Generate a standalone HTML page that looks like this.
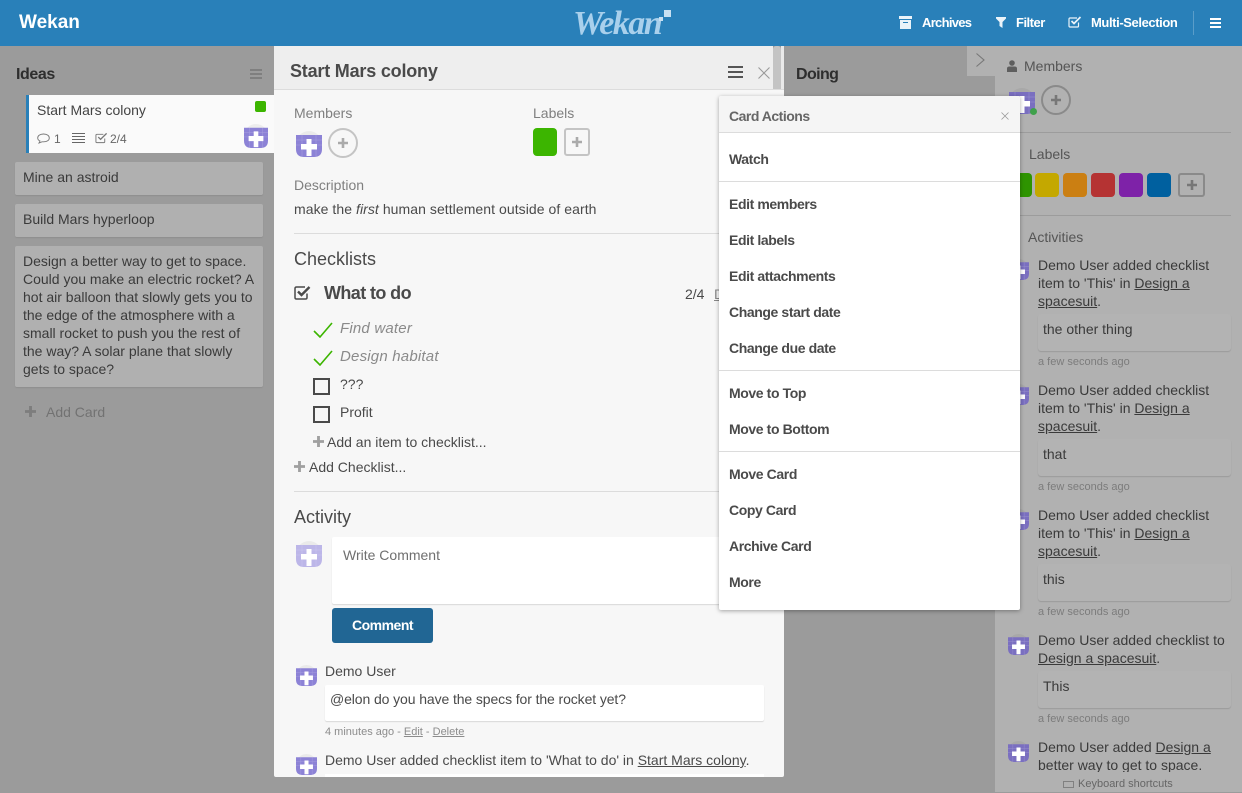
<!DOCTYPE html>
<html><head><meta charset="utf-8"><style>
html,body{margin:0;padding:0}
body{width:1242px;height:792px;overflow:hidden;position:relative;background:#9b9b9b;font-family:"Liberation Sans",sans-serif;color:#4a4a4a;font-size:14px}
.t{position:absolute;white-space:nowrap;line-height:18px}
.b{font-weight:bold}
.box{position:absolute}
u{text-underline-offset:1px}
svg{position:absolute;display:block}
.hd{color:#fff;font-weight:bold;font-size:13px;top:14px}
.m{left:729px;font-weight:bold;font-size:14px;color:#4a4a4a;letter-spacing:-.4px}
.sep{position:absolute;height:1px;background:#dcdcdc}
.card{position:absolute;left:15px;width:248px;background:#b0b0b0;border-radius:2px;box-shadow:0 1px 1px #8f8f8f}
.s{color:#3a3a3a}
.sc{position:absolute;left:1038px;width:193px;background:#b3b3b3;border-radius:3px;box-shadow:0 1px 1px #9a9a9a;height:37px}
.time{color:#7c7c7c;font-size:11px}
</style></head><body>

<svg width="0" height="0" style="position:absolute"><defs>
<symbol id="av" viewBox="0 0 26 26"><circle cx="13" cy="13" r="13" fill="#000" opacity=".05"/><path d="M0 4H26V18Q26 26 18 26H8Q0 26 0 18Z" fill="currentColor"/><path d="M0 9H26M0 14H26M6 4V26M20 4V26" stroke="#fff" stroke-width=".5" opacity=".25"/><path d="M10.500 8H15.500V13H21V18.500H15.500V25H10.500V18.500H5V13H10.500Z" fill="#fff"/></symbol>
<symbol id="pl" viewBox="0 0 10 10"><path d="M3.700 0H6.300V3.700H10V6.300H6.300V10H3.700V6.300H0V3.700H3.700Z" fill="currentColor"/></symbol>
<symbol id="ck" viewBox="0 0 20 16"><path d="M1 9L7 15L19 1" fill="none" stroke="#3cb500" stroke-width="1.600"/></symbol>
</defs></svg>

<!-- header -->
<div class="box" style="left:0;top:0;width:1242px;height:46px;background:#2980b9"></div>
<div class="t b" style="left:19px;top:11px;font-size:19px;line-height:24px;color:#fff">Wekan</div>
<div class="t" style="left:573px;top:5px;font:italic bold 34px/38px 'Liberation Serif',serif;color:#a9d0ec;letter-spacing:-1.500px">Wekan</div>
<div class="box" style="left:664px;top:10px;width:7px;height:7px;background:#c7e0f2"></div>
<div class="box" style="left:659px;top:17px;width:4px;height:4px;background:#c7e0f2"></div>
<svg style="left:899px;top:16px" width="13" height="13" viewBox="0 0 13 13"><path d="M0 0H13V3H0ZM1 4H12V13H1Z" fill="#eaf3f9"/><path d="M4 6H9V7H4Z" fill="#2980b9"/></svg>
<div class="t hd" style="left:922px;letter-spacing:-.7px">Archives</div>
<svg style="left:996px;top:17px" width="10" height="11" viewBox="0 0 10 11"><path d="M0 0H10V1.500L6.500 5V11L3.500 9V5L0 1.500Z" fill="#eaf3f9"/></svg>
<div class="t hd" style="left:1016px;letter-spacing:-.5px">Filter</div>
<svg style="left:1068px;top:16px" width="14" height="12" viewBox="0 0 14 12"><path d="M10.500 6.500V10Q10.500 11 9.500 11H2Q1 11 1 10V3Q1 2 2 2H9" fill="none" stroke="#eaf3f9" stroke-width="1.200"/><path d="M3.500 5L6 7.500L12.500 1" fill="none" stroke="#eaf3f9" stroke-width="1.700"/></svg>
<div class="t hd" style="left:1091px;letter-spacing:-.4px">Multi-Selection</div>
<div class="box" style="left:1193px;top:11px;width:1px;height:24px;background:#5a9dc9"></div>
<div class="box" style="left:1210px;top:18px;width:11px;height:2px;background:#fff;box-shadow:0 4px 0 #fff,0 8px 0 #fff"></div>

<!-- left list -->
<div class="t b" style="left:16px;top:66px;font-size:16px;color:#2e2e2e;letter-spacing:-.4px">Ideas</div>
<div class="box" style="left:250px;top:69px;width:12px;height:2px;background:#7f7f7f;box-shadow:0 4px 0 #7f7f7f,0 8px 0 #7f7f7f"></div>
<div class="box" style="left:26px;top:95px;width:248px;height:58px;background:#fafafa;box-sizing:border-box;border-left:3px solid #2980b9"></div>
<div class="t" style="left:37px;top:101px;color:#444">Start Mars colony</div>
<div class="box" style="left:255px;top:101px;width:11px;height:11px;background:#3cb500;border-radius:2px"></div>
<svg style="left:37px;top:133px" width="13" height="11" viewBox="0 0 13 11"><path d="M6.500 1C3 1 .7 2.800.7 5C.7 6.300 1.600 7.400 3 8L2 10L5 8.800H6.500C10 8.800 12.300 7.200 12.300 5C12.300 2.800 10 1 6.500 1Z" fill="none" stroke="#777" stroke-width=".9"/></svg>
<div class="t" style="left:54px;top:130px;font-size:12px;color:#666">1</div>
<div class="box" style="left:72px;top:133px;width:13px;height:1px;background:#666;box-shadow:0 3px 0 #666,0 6px 0 #666,0 9px 0 #666"></div>
<svg style="left:95px;top:132px" width="13" height="12" viewBox="0 0 14 12"><path d="M10.500 6.500V10Q10.500 11 9.500 11H2Q1 11 1 10V3Q1 2 2 2H9" fill="none" stroke="#777" stroke-width="1"/><path d="M3.500 5L6 7.500L12.500 1" fill="none" stroke="#777" stroke-width="1.400"/></svg>
<div class="t" style="left:110px;top:130px;font-size:12px;color:#666">2/4</div>
<svg style="left:244px;top:124px;color:#8c82d6" width="24" height="24"><use href="#av"/></svg>

<div class="card" style="top:162px;height:33px"></div>
<div class="t s" style="left:23px;top:168px">Mine an astroid</div>
<div class="card" style="top:204px;height:33px"></div>
<div class="t s" style="left:23px;top:210px">Build Mars hyperloop</div>
<div class="card" style="top:246px;height:141px"></div>
<div class="t s" style="left:23px;top:252px">Design a better way to get to space.</div>
<div class="t s" style="left:23px;top:270px">Could you make an electric rocket? A</div>
<div class="t s" style="left:23px;top:288px">hot air balloon that slowly gets you to</div>
<div class="t s" style="left:23px;top:306px">the edge of the atmosphere with a</div>
<div class="t s" style="left:23px;top:324px">small rocket to push you the rest of</div>
<div class="t s" style="left:23px;top:342px">the way? A solar plane that slowly</div>
<div class="t s" style="left:23px;top:360px">gets to space?</div>
<svg style="left:25px;top:406px;color:#7d7d7d" width="11" height="11"><use href="#pl"/></svg>
<div class="t" style="left:46px;top:403px;color:#727272">Add Card</div>

<!-- Doing column -->
<div class="t b" style="left:796px;top:66px;font-size:16px;color:#2e2e2e;letter-spacing:-.6px">Doing</div>
<div class="box" style="left:773px;top:46px;width:8px;height:50px;background:#c4c4c4;border-radius:3px"></div>
<div class="box" style="left:781px;top:46px;width:3px;height:50px;background:#e9e9e9"></div>

<!-- sidebar -->
<div class="box" style="left:995px;top:46px;width:247px;height:746px;background:#b1b1b1"></div>
<div class="box" style="left:967px;top:46px;width:28px;height:30px;background:#b1b1b1"></div>
<svg style="left:975px;top:52px" width="11" height="16" viewBox="0 0 11 16"><path d="M1.500 1.500L9 8L1.500 14.500" fill="none" stroke="#777" stroke-width="1.100"/></svg>
<svg style="left:1007px;top:60px" width="10" height="12" viewBox="0 0 10 12"><circle cx="5" cy="3" r="2.800" fill="#5e5e5e"/><path d="M0 12V8.500Q0 6.500 2.500 6.500H7.500Q10 6.500 10 8.500V12Z" fill="#5e5e5e"/></svg>
<div class="t" style="left:1024px;top:57px;color:#555">Members</div>
<svg style="left:1009px;top:88px;color:#7a6fc0" width="26" height="26"><use href="#av"/></svg>
<div class="box" style="left:1030px;top:108px;width:7px;height:7px;border-radius:50%;background:#3fa14b"></div>
<div class="box" style="left:1041px;top:85px;width:30px;height:30px;box-sizing:border-box;border:2px solid #8a8a8a;border-radius:50%"></div>
<svg style="left:1051px;top:95px;color:#777" width="10" height="10"><use href="#pl"/></svg>
<div class="sep" style="left:1007px;top:132px;width:224px;background:#9c9c9c"></div>
<div class="t" style="left:1029px;top:145px;color:#555">Labels</div>
<div class="box" style="left:1010px;top:173px;width:22px;height:24px;background:#2e9400;border-radius:4px"></div>
<div class="box" style="left:1035px;top:173px;width:24px;height:24px;background:#c4a800;border-radius:4px"></div>
<div class="box" style="left:1063px;top:173px;width:24px;height:24px;background:#cb7f12;border-radius:4px"></div>
<div class="box" style="left:1091px;top:173px;width:24px;height:24px;background:#b53333;border-radius:4px"></div>
<div class="box" style="left:1119px;top:173px;width:24px;height:24px;background:#7e22a8;border-radius:4px"></div>
<div class="box" style="left:1147px;top:173px;width:24px;height:24px;background:#00609f;border-radius:4px"></div>
<div class="box" style="left:1178px;top:173px;width:27px;height:24px;box-sizing:border-box;border:2px solid #8a8a8a;border-radius:3px"></div>
<svg style="left:1187px;top:180px;color:#777" width="10" height="10"><use href="#pl"/></svg>
<div class="sep" style="left:1007px;top:215px;width:224px;background:#9c9c9c"></div>
<div class="t" style="left:1028px;top:228px;color:#555">Activities</div>

<svg style="left:1008px;top:259px;color:#7a6fc0" width="21" height="21"><use href="#av"/></svg>
<div class="t s" style="left:1038px;top:256px">Demo User added checklist</div>
<div class="t s" style="left:1038px;top:274px">item to 'This' in <u>Design a</u></div>
<div class="t s" style="left:1038px;top:292px"><u>spacesuit</u>.</div>
<div class="sc" style="top:314px"></div>
<div class="t s" style="left:1043px;top:320px">the other thing</div>
<div class="t time" style="left:1038px;top:353px">a few seconds ago</div>

<svg style="left:1008px;top:384px;color:#7a6fc0" width="21" height="21"><use href="#av"/></svg>
<div class="t s" style="left:1038px;top:381px">Demo User added checklist</div>
<div class="t s" style="left:1038px;top:399px">item to 'This' in <u>Design a</u></div>
<div class="t s" style="left:1038px;top:417px"><u>spacesuit</u>.</div>
<div class="sc" style="top:439px"></div>
<div class="t s" style="left:1043px;top:445px">that</div>
<div class="t time" style="left:1038px;top:478px">a few seconds ago</div>

<svg style="left:1008px;top:509px;color:#7a6fc0" width="21" height="21"><use href="#av"/></svg>
<div class="t s" style="left:1038px;top:506px">Demo User added checklist</div>
<div class="t s" style="left:1038px;top:524px">item to 'This' in <u>Design a</u></div>
<div class="t s" style="left:1038px;top:542px"><u>spacesuit</u>.</div>
<div class="sc" style="top:564px"></div>
<div class="t s" style="left:1043px;top:570px">this</div>
<div class="t time" style="left:1038px;top:603px">a few seconds ago</div>

<svg style="left:1008px;top:634px;color:#7a6fc0" width="21" height="21"><use href="#av"/></svg>
<div class="t s" style="left:1038px;top:631px">Demo User added checklist to</div>
<div class="t s" style="left:1038px;top:649px"><u>Design a spacesuit</u>.</div>
<div class="sc" style="top:671px"></div>
<div class="t s" style="left:1043px;top:677px">This</div>
<div class="t time" style="left:1038px;top:710px">a few seconds ago</div>

<svg style="left:1008px;top:741px;color:#7a6fc0" width="21" height="21"><use href="#av"/></svg>
<div class="t s" style="left:1038px;top:738px">Demo User added <u>Design a</u></div>
<div class="box" style="left:1038px;top:756px;width:190px;height:16px;overflow:hidden"><div class="t s" style="left:0;top:0">better way to get to space.</div></div>
<div class="box" style="left:1063px;top:781px;width:11px;height:7px;border:1px solid #808080;box-sizing:border-box"></div>
<div class="t" style="left:1078px;top:775px;font-size:11px;color:#666">Keyboard shortcuts</div>

<!-- card modal -->
<div class="box" style="left:274px;top:46px;width:499px;height:44px;background:#eee"></div>
<div class="box" style="left:274px;top:89px;width:510px;height:1px;background:#dcdcdc"></div>
<div class="box" style="left:274px;top:90px;width:510px;height:687px;background:#f7f7f7;border-radius:0 0 2px 2px"></div>
<div class="t b" style="left:290px;top:59px;font-size:18px;line-height:24px;color:#4a4a4a;letter-spacing:-.2px">Start Mars colony</div>
<div class="box" style="left:728px;top:66px;width:15px;height:2px;background:#555;box-shadow:0 5px 0 #555,0 10px 0 #555"></div>
<svg style="left:758px;top:67px" width="12" height="12" viewBox="0 0 12 12"><path d="M.5.500L11.500 11.500M11.500.500L.5 11.500" stroke="#999" stroke-width="1.100"/></svg>

<div class="t" style="left:294px;top:104px;color:#7f7f7f">Members</div>
<svg style="left:296px;top:131px;color:#8c82d6" width="26" height="26"><use href="#av"/></svg>
<div class="box" style="left:328px;top:128px;width:30px;height:30px;box-sizing:border-box;border:2px solid #c4c4c4;border-radius:50%"></div>
<svg style="left:338px;top:138px;color:#aaa" width="10" height="10"><use href="#pl"/></svg>
<div class="t" style="left:533px;top:104px;color:#7f7f7f">Labels</div>
<div class="box" style="left:533px;top:128px;width:24px;height:28px;background:#3cb500;border-radius:4px"></div>
<div class="box" style="left:564px;top:128px;width:26px;height:28px;box-sizing:border-box;border:2px solid #c4c4c4;border-radius:3px"></div>
<svg style="left:572px;top:137px;color:#aaa" width="10" height="10"><use href="#pl"/></svg>
<div class="t" style="left:294px;top:176px;color:#7f7f7f">Description</div>
<div class="t" style="left:294px;top:200px;letter-spacing:.06px">make the <i>first</i> human settlement outside of earth</div>
<div class="sep" style="left:294px;top:233px;width:430px"></div>

<div class="t" style="left:294px;top:248px;font-size:18px;line-height:22px">Checklists</div>
<svg style="left:294px;top:285px" width="17" height="15" viewBox="0 0 17 15"><path d="M13 8.500V12.500Q13 14 11.500 14H2.500Q1 14 1 12.500V3.500Q1 2 2.500 2H11" fill="none" stroke="#4a4a4a" stroke-width="1.500"/><path d="M4 6.500L7.500 10L15.500 2" fill="none" stroke="#4a4a4a" stroke-width="2.400"/></svg>
<div class="t b" style="left:324px;top:282px;font-size:18px;line-height:22px;letter-spacing:-.6px">What to do</div>
<div class="t" style="left:685px;top:285px">2/4</div>
<div class="t" style="left:714px;top:285px;color:#888"><u>D</u></div>
<svg style="left:313px;top:322px" width="20" height="16"><use href="#ck"/></svg>
<div class="t" style="left:340px;top:320px;font-size:15px;font-style:italic;color:#8a8a8a;letter-spacing:.2px">Find water</div>
<svg style="left:313px;top:350px" width="20" height="16"><use href="#ck"/></svg>
<div class="t" style="left:340px;top:348px;font-size:15px;font-style:italic;color:#8a8a8a;letter-spacing:.2px">Design habitat</div>
<div class="box" style="left:313px;top:378px;width:17px;height:17px;box-sizing:border-box;border:2px solid #4a4a4a"></div>
<div class="t" style="left:340px;top:375px">???</div>
<div class="box" style="left:313px;top:406px;width:17px;height:17px;box-sizing:border-box;border:2px solid #4a4a4a"></div>
<div class="t" style="left:340px;top:403px">Profit</div>
<svg style="left:313px;top:436px;color:#a0a0a0" width="11" height="11"><use href="#pl"/></svg>
<div class="t" style="left:327px;top:433px">Add an item to checklist...</div>
<svg style="left:294px;top:461px;color:#a0a0a0" width="11" height="11"><use href="#pl"/></svg>
<div class="t" style="left:309px;top:458px">Add Checklist...</div>
<div class="sep" style="left:294px;top:491px;width:430px"></div>

<div class="t" style="left:294px;top:506px;font-size:18px;line-height:22px">Activity</div>
<svg style="left:296px;top:541px;color:#bcb6e8" width="26" height="26"><use href="#av"/></svg>
<div class="box" style="left:332px;top:537px;width:390px;height:67px;background:#fff;border-radius:2px;box-shadow:0 1px 1px #d8d8d8"></div>
<div class="t" style="left:343px;top:546px;color:#6f6f6f">Write Comment</div>
<div class="box" style="left:332px;top:608px;width:101px;height:35px;background:#216694;border-radius:3px"></div>
<div class="t b" style="left:352px;top:616px;color:#fff;letter-spacing:-.5px">Comment</div>

<svg style="left:296px;top:665px;color:#8c82d6" width="21" height="21"><use href="#av"/></svg>
<div class="t" style="left:325px;top:662px">Demo User</div>
<div class="box" style="left:325px;top:685px;width:439px;height:36px;background:#fff;border-radius:2px;box-shadow:0 1px 1px #d8d8d8"></div>
<div class="t" style="left:330px;top:690px;letter-spacing:-.1px">@elon do you have the specs for the rocket yet?</div>
<div class="t" style="left:325px;top:723px;font-size:11px;color:#8c8c8c">4 minutes ago - <u>Edit</u> - <u>Delete</u></div>
<svg style="left:296px;top:754px;color:#8c82d6" width="21" height="21"><use href="#av"/></svg>
<div class="t" style="left:325px;top:751px">Demo User added checklist item to 'What to do' in <u>Start Mars colony</u>.</div>
<div class="box" style="left:325px;top:774px;width:439px;height:3px;background:#fff"></div>

<!-- Card actions popup -->
<div class="box" style="left:719px;top:96px;width:301px;height:514px;background:#fff;border-radius:2px;box-shadow:0 1px 4px rgba(0,0,0,.35)"></div>
<div class="box" style="left:719px;top:96px;width:301px;height:36px;background:#f5f5f5;border-bottom:1px solid #dcdcdc;border-radius:2px 2px 0 0"></div>
<div class="t b" style="left:729px;top:107px;color:#666;font-size:14px;letter-spacing:-.5px">Card Actions</div>
<svg style="left:1001px;top:112px" width="8" height="8" viewBox="0 0 8 8"><path d="M.5.500L7.500 7.500M7.500.500L.5 7.500" stroke="#999" stroke-width=".8"/></svg>
<div class="t m" style="top:150px">Watch</div>
<div class="sep" style="left:719px;top:181px;width:301px"></div>
<div class="t m" style="top:195px">Edit members</div>
<div class="t m" style="top:231px">Edit labels</div>
<div class="t m" style="top:267px">Edit attachments</div>
<div class="t m" style="top:303px">Change start date</div>
<div class="t m" style="top:339px">Change due date</div>
<div class="sep" style="left:719px;top:370px;width:301px"></div>
<div class="t m" style="top:384px">Move to Top</div>
<div class="t m" style="top:420px">Move to Bottom</div>
<div class="sep" style="left:719px;top:451px;width:301px"></div>
<div class="t m" style="top:465px">Move Card</div>
<div class="t m" style="top:501px">Copy Card</div>
<div class="t m" style="top:537px">Archive Card</div>
<div class="t m" style="top:573px">More</div>

</body></html>
